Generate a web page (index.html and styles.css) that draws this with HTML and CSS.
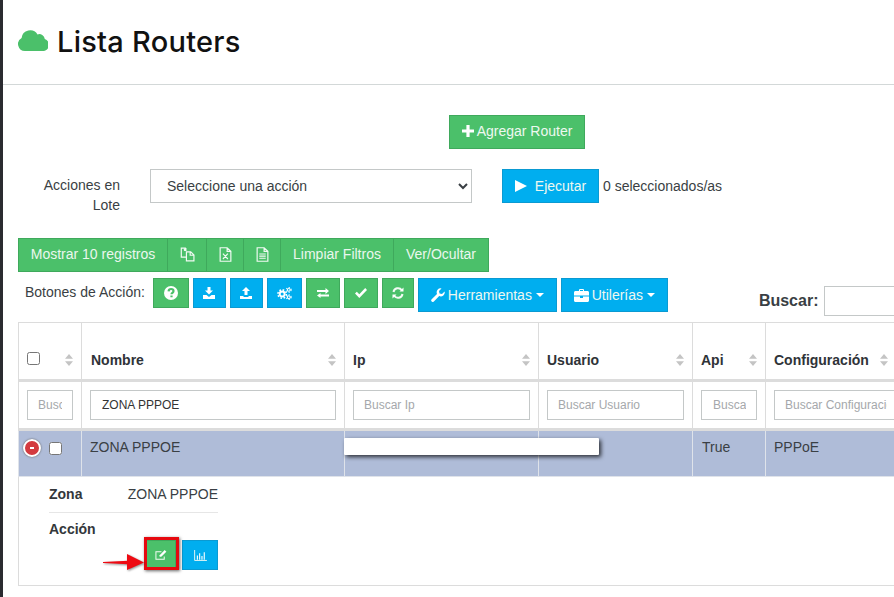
FILE: index.html
```html
<!DOCTYPE html>
<html lang="es">
<head>
<meta charset="utf-8">
<title>Lista Routers</title>
<link rel="stylesheet" href="styles.css">
</head>
<body>
<svg class="defs" width="0" height="0" aria-hidden="true">
  <symbol id="sort" viewBox="0 0 8 12"><path d="M4 0 8 4.800H0zM4 12 0 7.200H8z"/></symbol>
</svg>
<div class="app">
  <div class="rail"></div>
  <main class="main">
    <header class="page-head">
      <svg class="cloud" viewBox="0 0 30 22"><path d="M7 22A7 7 0 0 1 3.600 8.900 A8.600 8.600 0 0 1 19.500 5.400 A5.500 5.500 0 0 1 26.800 10 A6.200 6.200 0 0 1 24 22Z"/></svg>
      <h1 class="title">Lista Routers</h1>
    </header>

    <div class="add-row">
      <button class="btn green add"><svg class="ic" viewBox="0 0 12 12"><path d="M4.400 0h3.200v4.400H12v3.200H7.600V12H4.400V7.600H0V4.400h4.400z"/></svg> Agregar Router</button>
    </div>

    <div class="bulk-row">
      <label class="bulk-label">Acciones en Lote</label>
      <select class="bulk-select"><option>Seleccione una acción</option></select>
      <button class="btn blue run"><svg class="ic play" viewBox="0 0 12 12"><path d="M0 0 12 6 0 12z"/></svg> Ejecutar</button>
      <span class="count">0 seleccionados/as</span>
    </div>

    <div class="export-bar">
      <button class="seg seg-a">Mostrar 10 registros</button>
      <button class="seg seg-b"><svg class="ol ex-copy" viewBox="0 0 14 14"><path d="M5.500 1H1.200v8.500H6M5.500 1 3.700 3M5.500 1v2.200H3.600M6 4.500h4l3 3V13H6zM9.500 4.500v3.200H13"/></svg></button>
      <button class="seg seg-c"><svg class="ol ex-file" viewBox="0 0 12 14"><path d="M1 .7h6.500L11 4v9.300H1zM7.500.7V4H11M3.600 6.200l4.600 5M8.200 6.200l-4.600 5" /></svg></button>
      <button class="seg seg-c"><svg class="ol ex-file" viewBox="0 0 12 14"><path d="M1 .7h6.500L11 4v9.300H1zM7.500.7V4H11M3 6.500h6M3 8.500h6M3 10.500h6"/></svg></button>
      <button class="seg seg-d">Limpiar Filtros</button>
      <button class="seg seg-e">Ver/Ocultar</button>
    </div>

    <div class="action-row">
      <span class="action-label">Botones de Acción:</span>
      <div class="action-btns">
        <button class="btn green ib w36"><svg class="ic i13" viewBox="0 0 14 14"><circle cx="7" cy="7" r="7"/><path class="cut" d="M4.600 5.300C4.700 3.900 5.700 3 7.100 3c1.400 0 2.400.9 2.400 2.100 0 1.800-2 1.700-2 3.200M7.500 9.500v1.800" /></svg></button>
        <button class="btn blue ib w33"><svg class="ic i12" viewBox="0 0 12 12"><path d="M4.500 0h3v3.500H10L6 7.500 2 3.500h2.500zM0 8h3.500L6 10l2.500-2H12v4H0z"/></svg></button>
        <button class="btn blue ib w33"><svg class="ic i12" viewBox="0 0 12 12"><path d="M6 0l4 4H7.500v4h-3V4H2zM0 9h3.500v1h5V9H12v3H0z"/></svg></button>
        <button class="btn blue ib w35"><svg class="ic i14" viewBox="0 0 14 12"><circle class="gear-ring" cx="4.800" cy="6.500" r="2.300"/><circle class="gear" cx="4.800" cy="6.500" r="3.900"/><circle class="gear2-ring" cx="11" cy="2.600" r="1.300"/><circle class="gear2" cx="11" cy="2.600" r="2.200"/><circle class="gear2-ring" cx="11" cy="9.400" r="1.300"/><circle class="gear2" cx="11" cy="9.400" r="2.200"/></svg></button>
        <button class="btn green ib w34"><svg class="ic i12" viewBox="0 0 12 10"><path d="M0 2h8.500V0L12 3 8.500 6V4H0zM12 6.500H3.500V5L0 7.500 3.500 10V8.500H12z" /></svg></button>
        <button class="btn green ib w34"><svg class="ic i12" viewBox="0 0 12 10"><path d="M4.300 10 0 5.600 1.800 3.800l2.500 2.500L10.200 0 12 1.900z"/></svg></button>
        <button class="btn green ib w32"><svg class="ol ol2 i12" viewBox="0 0 12 12"><path d="M1.500 5A4.600 4.600 0 0 1 9.800 3.200M10.500 7A4.600 4.600 0 0 1 2.200 8.800"/><path class="solid" d="M11.500 .5v4h-4zM.5 11.500v-4h4z"/></svg></button>
        <button class="btn blue tall w139"><svg class="ic i13" viewBox="0 0 14 14"><path d="M13.600 3.400a4 4 0 0 1-5.400 4.700L2.900 13.500a1.400 1.400 0 0 1-2.200-2.200l5.300-5.400A4 4 0 0 1 10.500.400L8 2.900l.5 2.500 2.500.6z"/></svg> Herramientas <i class="caret"></i></button>
        <button class="btn blue tall w107"><svg class="ic i15" viewBox="0 0 15 13"><path d="M5 2V1.200C5 .5 5.500 0 6.200 0h2.600C9.500 0 10 .5 10 1.200V2h3.500c.8 0 1.500.7 1.500 1.500V6.500H0V3.500C0 2.700.7 2 1.500 2zM6 2h3V1H6zM0 7.500h6V9h3V7.500h6v4c0 .8-.7 1.500-1.500 1.500h-12C.7 13 0 12.300 0 11.500z"/></svg> Utilerías <i class="caret"></i></button>
      </div>
      <label class="search"><span>Buscar:</span><input class="search-input" type="text"></label>
    </div>

    <div class="table-wrap">
      <table class="grid">
        <colgroup><col class="c1"><col class="c2"><col class="c3"><col class="c4"><col class="c5"><col class="c6"></colgroup>
        <thead>
          <tr class="heads">
            <th class="check-head"><span class="th"><input type="checkbox" class="cb"><svg class="sort"><use href="#sort"/></svg></span></th>
            <th class="name"><span class="th">Nombre<svg class="sort"><use href="#sort"/></svg></span></th>
            <th><span class="th">Ip<svg class="sort"><use href="#sort"/></svg></span></th>
            <th><span class="th">Usuario<svg class="sort"><use href="#sort"/></svg></span></th>
            <th><span class="th">Api<svg class="sort"><use href="#sort"/></svg></span></th>
            <th><span class="th th-last">Configuración<svg class="sort"><use href="#sort"/></svg></span></th>
          </tr>
          <tr class="filters">
            <td><input class="f" placeholder="Buscar"></td>
            <td><input class="f f-val" value="ZONA PPPOE"></td>
            <td><input class="f" placeholder="Buscar Ip"></td>
            <td><input class="f" placeholder="Buscar Usuario"></td>
            <td><input class="f f-api" placeholder="Buscar Api"></td>
            <td><input class="f f-last" placeholder="Buscar Configuración"></td>
          </tr>
        </thead>
        <tbody>
          <tr class="row">
            <td class="ctl"><span class="ctl-in"><span class="minus"></span><input type="checkbox" class="cb cb-row"></span></td>
            <td>ZONA PPPOE</td>
            <td></td>
            <td></td>
            <td class="api">True</td>
            <td>PPPoE</td>
          </tr>
          <tr class="detail">
            <td colspan="6">
              <div class="detail-box">
                <div class="d-line"><b>Zona</b><span>ZONA PPPOE</span></div>
                <div class="d-action">
                  <b>Acción</b>
                  <div class="d-btns">
                    <button class="btn green small"><svg class="ol i12" viewBox="0 0 13 12"><path d="M10 7.500V10.500H1V2.500H7"/><path class="solid" d="M5 6.200 10.500 .7l1.800 1.800L6.800 8H5z"/></svg></button>
                    <button class="btn blue chart"><svg class="ol chart-ic" viewBox="0 0 14 12"><path d="M.6 0V11.400H14"/><path class="solid" d="M3 6h1.200v4.500H3zM5.500 3.500h1.200v7H5.500zM8 6.500h1.200v4H8zM10.500 2.500h1.200v8H10.500z"/></svg></button>
                  </div>
                </div>
              </div>
            </td>
          </tr>
        </tbody>
      </table>
      <div class="redact"></div>
      <div class="mark"></div>
      <svg class="arrow" viewBox="0 0 42 20"><path d="M0 9 25 7.800V11.200L0 10z"/><path d="M24 1 41 9.500 24 17z"/></svg>
    </div>
  </main>
</div>
</body>
</html>
```

FILE: styles.css
```css
* { box-sizing: border-box; }
html, body { margin: 0; height: 100%; overflow: hidden; background: #fff; }
body { font: 14px/20px "Liberation Sans", Arial, sans-serif; color: #3a3f44; }
.defs { position: absolute; }

.app { display: flex; height: 597px; width: 894px; overflow: hidden; }
.rail { flex: 0 0 3px; background: #2a2b30; }
.main { flex: 1 1 auto; min-width: 0; overflow: hidden; }

.page-head { height: 85px; border-bottom: 1px solid #d3d8d8; padding: 26px 0 0 15px; display: flex; align-items: flex-start; gap: 9px; }
.cloud { width: 30px; height: 22px; margin-top: 3px; fill: #4bc06a; }
.title { margin: 0; font: 500 29px/31px Inter, "Open Sans", sans-serif; letter-spacing: .25px; color: #111; }

.btn { font: 14px/20px "Liberation Sans", Arial, sans-serif; color: #eef8f0; border: 1px solid; padding: 0; cursor: pointer; border-radius: 0; display: inline-flex; align-items: center; justify-content: center; }
.green { background: #4bc06a; border-color: #3fa95c; }
.blue { background: #00aeef; border-color: #0a9ad2; }

.add-row { padding: 30px 0 0 446px; }
.add { width: 136px; height: 34px; gap: 3px; padding-bottom: 2px; }

.ic { fill: #fff; width: 12px; height: 12px; flex: none; }
.ol { fill: none; stroke: #f2faf4; stroke-width: 1.100; width: 14px; height: 14px; flex: none; }
.ol .solid { fill: #fff; stroke: none; }
.ol2 { stroke-width: 2; }
.ex-copy { width: 15px; height: 15px; }
.ex-file { width: 13px; height: 15px; }
.i12 { width: 12px; height: 12px; }
.i13 { width: 14px; height: 14px; }
.i14 { width: 15px; height: 13px; }
.i15 { width: 15px; height: 13px; }
.chart-ic { width: 13px; height: 11px; stroke-width: 1; }
.cut { fill: none; stroke: #4bc06a; stroke-width: 2.200; }
.gear-ring { fill: none; stroke: #fff; stroke-width: 1.800; }
.gear { fill: none; stroke: #fff; stroke-width: 1.500; stroke-dasharray: 1.500 1.560; }
.gear2-ring { fill: none; stroke: #fff; stroke-width: 1; }
.gear2 { fill: none; stroke: #fff; stroke-width: 1; stroke-dasharray: 1 1.300; }

.bulk-row { display: flex; align-items: flex-start; margin-top: 20px; padding-left: 15px; }
.bulk-label { width: 132px; padding: 6px 30px 0 20px; text-align: right; line-height: 20px; }
.bulk-select { width: 322px; height: 34px; background: #fff; border: 1px solid #c4c8c8; font: 14px "Liberation Sans", Arial, sans-serif; color: #3a3f44; padding-left: 12px; border-radius: 0; }
.run { width: 97px; height: 34px; margin-left: 30px; gap: 8px; }
.play { width: 12px; height: 12px; }
.count { margin: 7px 0 0 4px; }

.export-bar { display: flex; margin: 23px 0 0 15px; height: 34px; width: 471px; background: #4bc06a; border: 1px solid #3fa95c; }
.seg { font: 14px "Liberation Sans", Arial, sans-serif; color: #eaf7ee; background: none; border: 0; border-right: 1px solid #3fa95c; padding: 0 0 2px; display: flex; align-items: center; justify-content: center; height: 100%; }
.seg:last-child { border-right: 0; flex: 1; }
.seg-a { width: 149px; }
.seg-b { width: 39px; }
.seg-c { width: 37px; }
.seg-d { width: 113px; }

.action-row { display: flex; align-items: flex-start; height: 44px; margin-top: 6px; padding-left: 22px; }
.action-label { margin: 4px 8px 0 0; white-space: nowrap; }
.action-btns { display: flex; gap: 4px; align-items: flex-start; flex: none; }
.ib { height: 30px; }
.w36 { width: 36px; } .w33 { width: 33px; } .w35 { width: 35px; } .w34 { width: 34px; } .w32 { width: 32px; }
.tall { height: 34px; gap: 3px; }
.w139 { width: 139px; } .w107 { width: 107px; }
.caret { display: block; width: 0; height: 0; border: 4px solid transparent; border-top-color: #fff; border-bottom: 0; margin-left: 1px; }

.search { display: flex; align-items: center; gap: 6px; margin: 8px 0 0 91px; flex: none; }
.search span { font-weight: 700; font-size: 16px; color: #3a3f44; }
.search-input { width: 120px; height: 30px; border: 1px solid #c4c8c8; padding: 0; background: #fff; }

.table-wrap { position: relative; margin-left: 15px; width: 940px; }
.grid { border-collapse: collapse; table-layout: fixed; width: 940px; }
.c1 { width: 63px; } .c2 { width: 263px; } .c3 { width: 194px; } .c4 { width: 154px; } .c5 { width: 73px; }
.grid th, .grid td { border: 1px solid #dcdcdc; padding: 0 8px; text-align: left; vertical-align: top; }
.heads th { height: 58px; border-bottom: 3px solid #dcdcdc; padding-top: 27px; font-weight: 700; color: #2f3338; }
.grid th.name { padding-left: 9px; }
.grid td.api { padding-left: 9px; }
.th { display: flex; align-items: center; justify-content: space-between; height: 20px; }
.th-last { width: 114px; }
.sort { width: 8px; height: 12px; fill: #c4c4c4; flex: none; }
.cb { width: 13px; height: 13px; margin: 0; }
.heads .cb { margin-top: -4px; }
.filters td { height: 49px; border-bottom: 3px solid #dcdcdc; }
.grid .filters td { padding-top: 8px; }
.f { width: 100%; height: 30px; border: 1px solid #c4c8c8; padding: 0 10px; font: 12px "Liberation Sans", Arial, sans-serif; color: #333; background: #fff; display: block; }
.f::placeholder { color: #a5a8ab; opacity: 1; }
.f-val { padding-left: 11px; }
.f-api { padding-left: 11px; }
.f-last { width: 124px; }
.row td { background: #afbcd8; height: 47px; border-color: #dfe3ea; }
.grid .row td { padding-top: 6px; }
.ctl-in { display: flex; align-items: center; gap: 8px; margin: 2px 0 0 -4px; }
.minus { width: 18px; height: 18px; border-radius: 50%; background: #d33a3f; border: 2px solid #fff; box-shadow: 0 0 2px #555; position: relative; flex: none; }
.minus::after { content: ""; position: absolute; left: 5px; top: 6px; width: 4px; height: 2px; background: #fff; }
.cb-row { border-radius: 3px; }
.grid .detail td { height: 109px; padding: 0 0 0 30px; border-top: 0; }
.detail-box { width: 169px; }
.d-line { display: flex; height: 36px; padding-top: 7px; border-bottom: 1px solid #e6e6e6; justify-content: space-between; color: #3a3f44; }
.d-line b, .d-action b { color: #33373b; }
.d-action { padding-top: 6px; }
.d-btns { display: flex; justify-content: flex-end; gap: 6px; margin-top: 1px; }
.small { width: 30px; height: 30px; }
.chart { width: 36px; height: 30px; }

.redact { position: absolute; left: 326px; top: 116px; width: 255px; height: 17px; background: #fff; border-radius: 1px; box-shadow: 2px 2px 4px rgba(0,0,0,.75); }
.mark { position: absolute; left: 126px; top: 215px; width: 35px; height: 33px; border: 3px solid #e6090f; box-shadow: 1px 1px 3px rgba(0,0,0,.6); }
.arrow { position: absolute; left: 85px; top: 231px; width: 42px; height: 20px; fill: #ee0a12; filter: drop-shadow(1px 1px 1px rgba(0,0,0,.45)); }
```
